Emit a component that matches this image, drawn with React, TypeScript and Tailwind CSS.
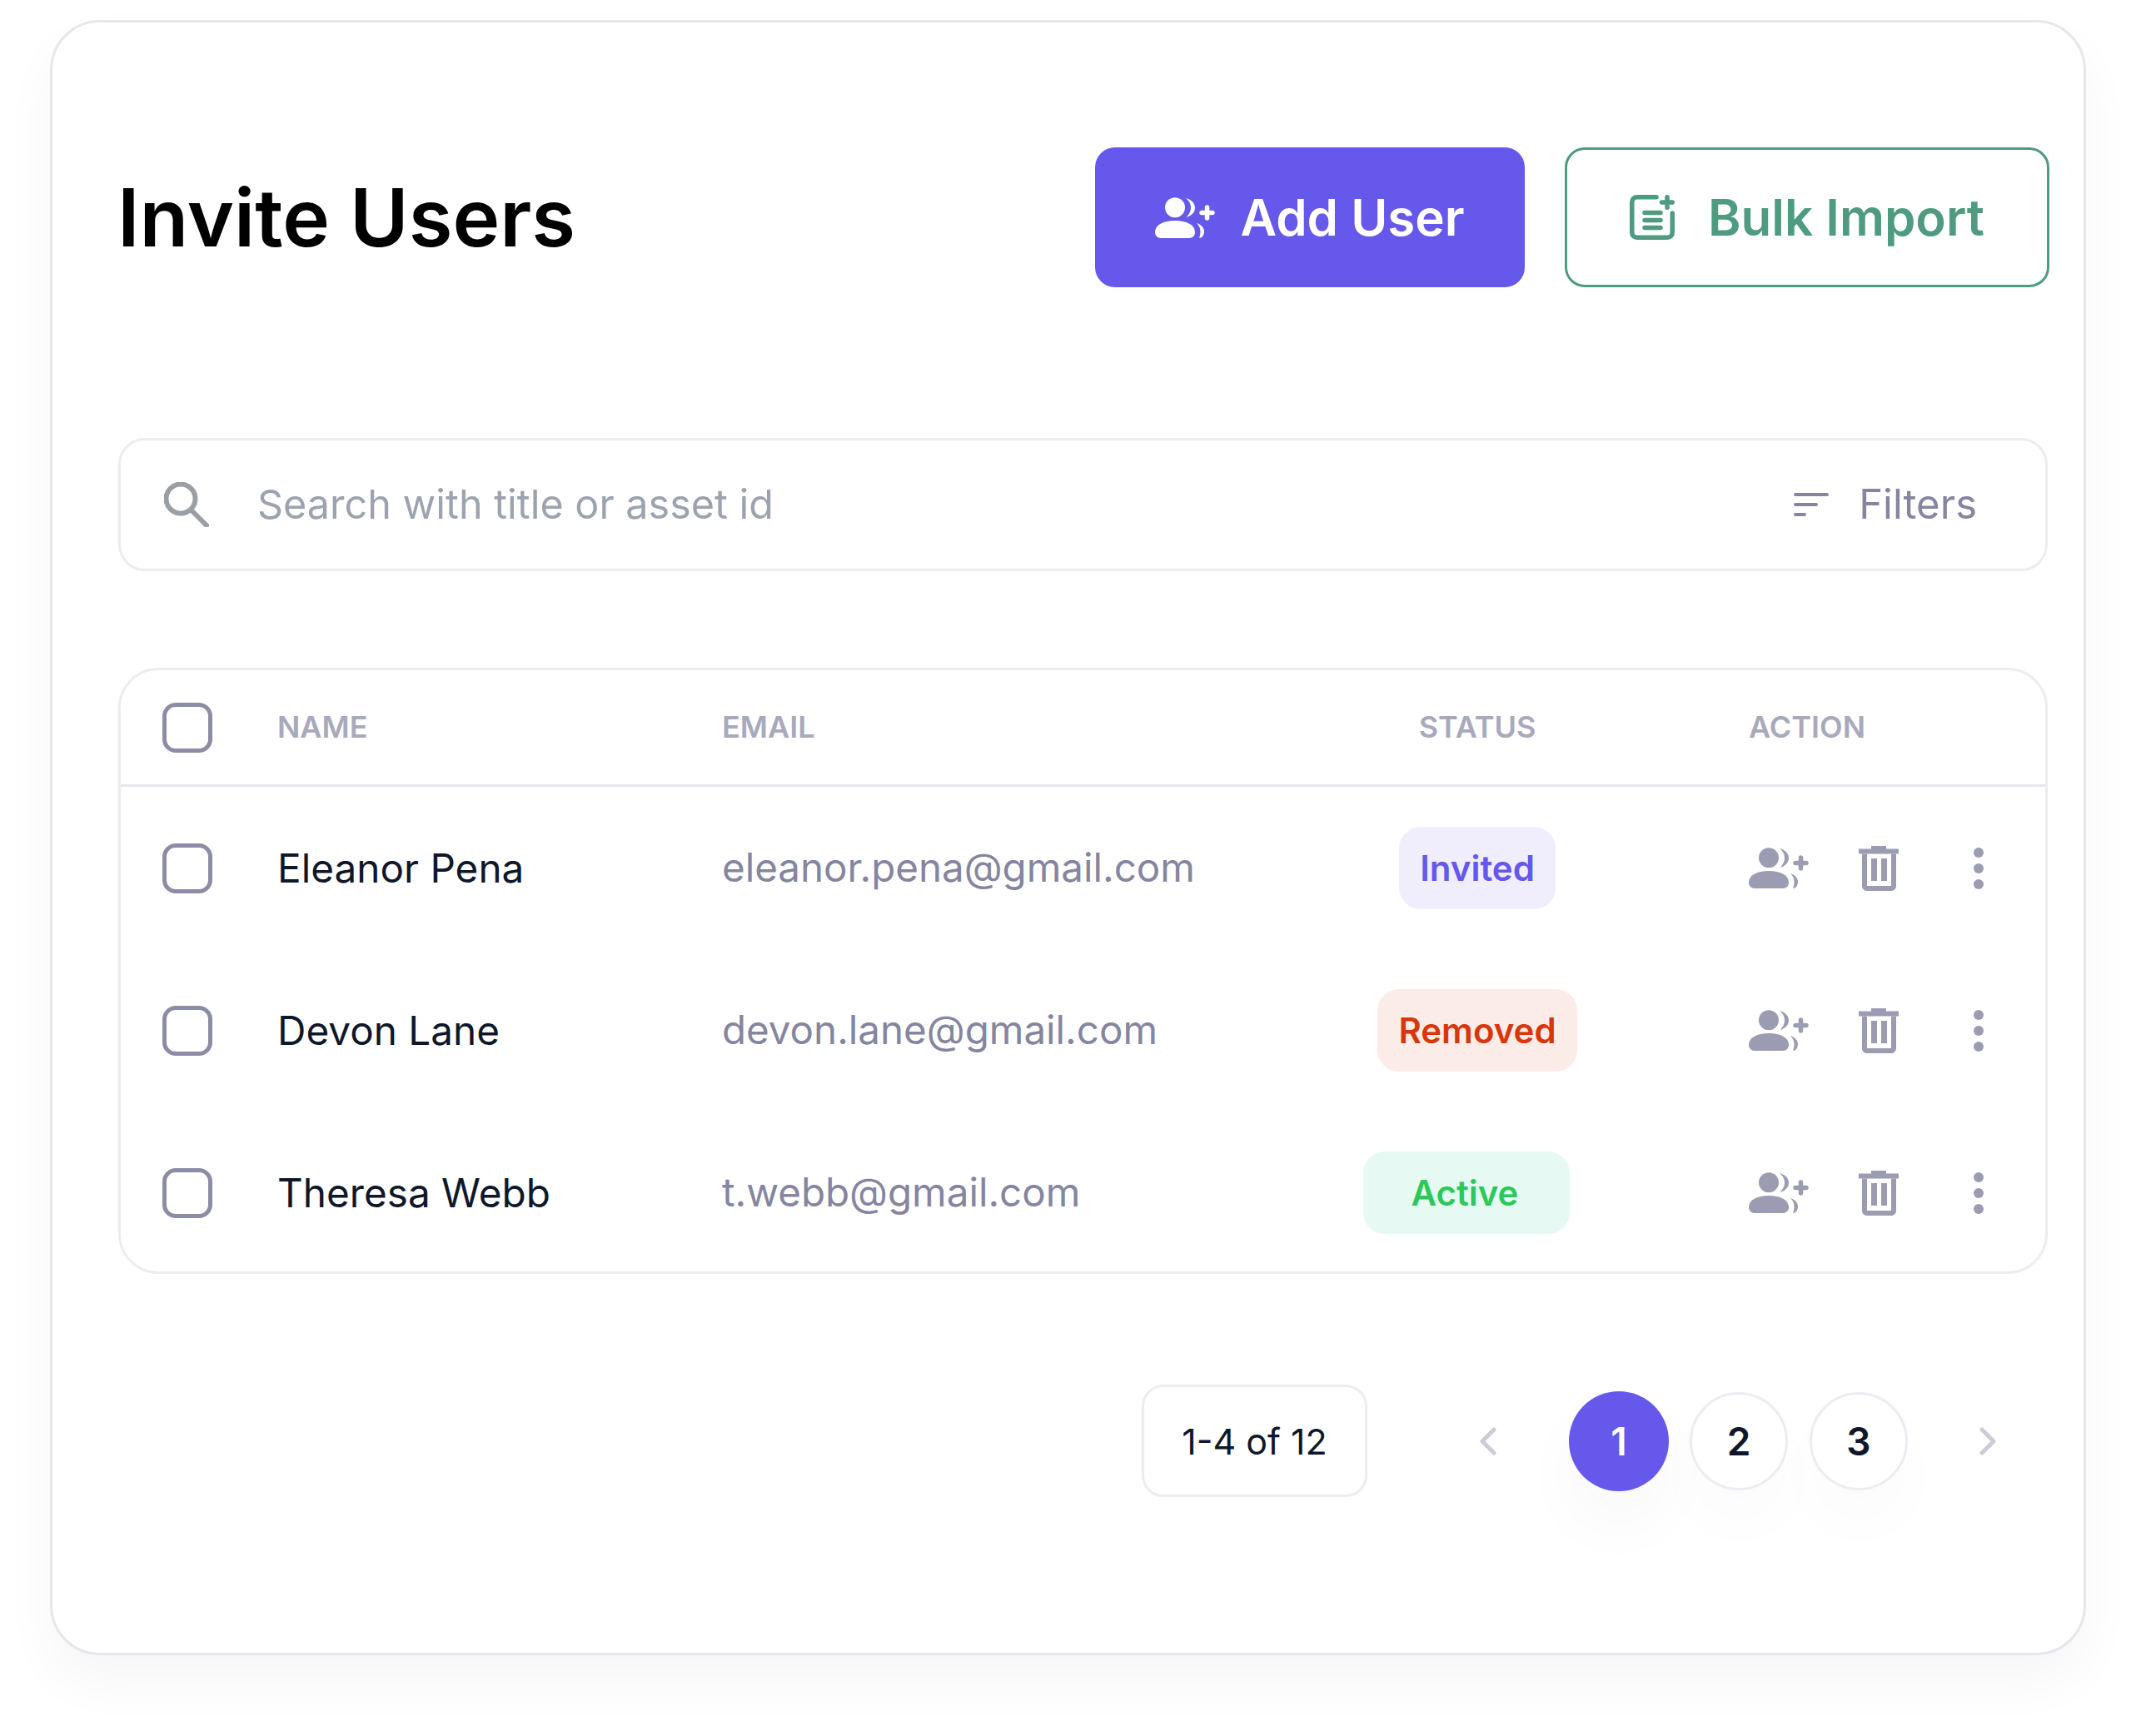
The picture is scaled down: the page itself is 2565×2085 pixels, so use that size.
import React from 'react';

const rows = [
  { name: 'Eleanor Pena', email: 'eleanor.pena@gmail.com', status: 'Invited' },
  { name: 'Devon Lane', email: 'devon.lane@gmail.com', status: 'Removed' },
  { name: 'Theresa Webb', email: 't.webb@gmail.com', status: 'Active' },
];

const UserPlusIcon: React.FC<{ className: string }> = ({ className }) => (
  <svg viewBox="0 0 72 49" className={className} fill="currentColor">
    <circle cx="24" cy="12.3" r="12" />
    <path d="M0 42C0 33 10 28 24 28C38 28 48 33 48 42C48 46 45 49 41 49H7C3 49 0 46 0 42Z" />
    <path d="M37 1C44 3 48 7 48 12.5C48 18 44 22 37.5 24C41 20 43 17 43 12.5C43 8 41 4 37 1Z" />
    <path d="M50 31C56 33 59 37 59 41C59 46 56 49 53 49C54 46 54.5 44 54.5 41C54.5 37 53 34 50 31Z" />
    <path d="M56 18.5H69M62.5 12V25" stroke="currentColor" strokeWidth="5.5" strokeLinecap="round" fill="none" />
  </svg>
);

const TrashIcon: React.FC = () => (
  <svg viewBox="0 0 48 54" className="w-[48px] h-[54px]" fill="currentColor">
    <path d="M15 0H33V3.5H48V9.5H0V3.5H15Z" />
    <path d="M4 9.5V48C4 51.5 6.5 54 10 54H39C42.5 54 45 51.5 45 48V9.5H39V48H10V9.5Z" />
    <path d="M15 15H22V42H15ZM27 15H34V42H27Z" />
  </svg>
);

const BulkIcon: React.FC = () => (
  <svg viewBox="0 0 54 54" className="w-[54px] h-[54px]" fill="none" stroke="currentColor" strokeWidth="5.5" strokeLinecap="round">
    <path d="M32 2.75H9C5 2.75 2.75 5 2.75 9V45C2.75 49 5 51.25 9 51.25H45C49 51.25 51.25 49 51.25 45V22" />
    <path d="M18 21.5H37M18 30.5H37M18 39.5H37" />
    <path d="M38.5 9H51.25M45 2.75V15.25" />
  </svg>
);

const Checkbox: React.FC = () => (
  <div className="w-[60px] h-[60px] rounded-[16px] border-[5px] border-[#8c8ca6] bg-white" />
);

const statusStyles: Record<string, string> = {
  Invited: 'bg-[#f0edfd] text-[#6558ea] px-[25px]',
  Removed: 'bg-[#fbece8] text-[#d8360c] px-[25px]',
  Active: 'bg-[#e6f9f2] text-[#2cc95a] pl-[58px] pr-[62px] mr-[26px]',
};

export default function App() {
  return (
    <div className="min-h-[2085px] bg-white pt-[24px] pl-[60px] font-['Inter',sans-serif]">
      <div className="w-[2445px] h-[1964px] rounded-[60px] border-[3px] border-[#e6e6ec] bg-white pt-[150px] pl-[79px] pr-[43px] shadow-[0_32px_64px_rgba(30,30,70,0.04)]">
        <div className="flex items-center justify-between h-[168px]">
          <h1 className="text-[96px] font-semibold text-black -ml-[1px]">Invite Users</h1>
          <div className="flex gap-[48px] -mr-[2px]">
            <button className="w-[516px] h-[168px] rounded-[24px] bg-[#6558ea] text-white flex items-center justify-center gap-[30px] text-[60px] font-semibold">
              <UserPlusIcon className="w-[72px] h-[49px]" />
              Add User
            </button>
            <button className="w-[582px] h-[168px] rounded-[24px] border-[3px] border-[#4e9b7f] text-[#4e9b7f] flex items-center justify-center gap-[40px] text-[60px] font-semibold">
              <BulkIcon />
              Bulk Import
            </button>
          </div>
        </div>

        <div className="mt-[181px] h-[160px] rounded-[32px] border-[3px] border-[#ececf1] flex items-center pl-[52px] pr-[82px]">
          <svg viewBox="0 0 54 54" className="w-[54px] h-[54px] text-[#9a9fa5]" fill="none" stroke="currentColor" strokeWidth="6" strokeLinecap="round">
            <circle cx="20" cy="20" r="17.5" />
            <path d="M32 33L51 52" />
          </svg>
          <span className="ml-[58px] text-[48.5px] text-[#9ca3af]">Search with title or asset id</span>
          <div className="ml-auto flex items-center gap-[36px] text-[#8585a0]">
            <svg viewBox="0 0 42 28" className="ml-[2px] w-[42px] h-[28px]" stroke="currentColor" strokeWidth="4" strokeLinecap="round">
              <path d="M2 2H40M2 14H27M2 26H13" />
            </svg>
            <span className="text-[49px]">Filters</span>
          </div>
        </div>

        <div className="mt-[116px] h-[728px] rounded-[48px] border-[3px] border-[#ececf1]">
          <div className="flex items-center h-[140px] border-b-[3px] border-[#e6e6ec] pl-[48px] text-[36px] font-semibold text-[#a9a9bc]">
            <div className="w-[140px] pl-[2px]"><Checkbox /></div>
            <div className="w-[534px] pb-[2px]">NAME</div>
            <div className="w-[733px] pb-[2px]">EMAIL</div>
            <div className="w-[348px] pb-[2px] text-center">STATUS</div>
            <div className="ml-[152px] pb-[2px]">ACTION</div>
          </div>
          {rows.map((r) => (
            <div key={r.email} className="flex items-center h-[195px] pl-[48px]">
              <div className="w-[140px] pl-[2px]"><Checkbox /></div>
              <div className="w-[534px] pt-[2px] text-[47.7px] text-[#0f172a]">{r.name}</div>
              <div className="w-[733px] pb-[1px] text-[47.5px] text-[#8585a0]">{r.email}</div>
              <div className="w-[348px] flex justify-center">
                <span className={`h-[99px] rounded-[26px] flex items-center text-[42px] font-semibold ${statusStyles[r.status]}`}>{r.status}</span>
              </div>
              <div className="ml-[152px] flex items-center text-[#9b9cb2]">
                <UserPlusIcon className="w-[72px] h-[49px]" />
                <div className="ml-[60px]"><TrashIcon /></div>
                <div className="ml-[90px] flex flex-col gap-[7px]">
                  <span className="w-[12px] h-[12px] rounded-full bg-[#9b9cb2]" />
                  <span className="w-[12px] h-[12px] rounded-full bg-[#9b9cb2]" />
                  <span className="w-[12px] h-[12px] rounded-full bg-[#9b9cb2]" />
                </div>
              </div>
            </div>
          ))}
        </div>

        <div className="mt-[133px] flex items-center pl-[1229px]">
          <div className="w-[271px] h-[135px] pt-[2px] rounded-[26px] border-[3px] border-[#ececf1] flex items-center justify-center text-[43px] text-[#0f172a]">1-4 of 12</div>
          <svg viewBox="0 0 21 34" className="ml-[134px] w-[21px] h-[34px] text-[#cbccd6]" fill="none" stroke="currentColor" strokeWidth="5" strokeLinecap="round" strokeLinejoin="round">
            <path d="M18 3L4 17L18 31" />
          </svg>
          <div className="ml-[87px] w-[120px] h-[120px] pt-[2px] rounded-full bg-[#6558ea] text-white flex items-center justify-center text-[46px] font-semibold shadow-[0_40px_80px_rgba(30,30,70,0.03)]">1</div>
          <div className="ml-[25px] w-[118px] h-[118px] pt-[2px] rounded-full border-[3px] border-[#ececf1] bg-white text-[#0f172a] flex items-center justify-center text-[46px] font-semibold shadow-[0_40px_80px_rgba(30,30,70,0.02)]">2</div>
          <div className="ml-[26px] w-[118px] h-[118px] pt-[2px] rounded-full border-[3px] border-[#ececf1] bg-white text-[#0f172a] flex items-center justify-center text-[46px] font-semibold shadow-[0_40px_80px_rgba(30,30,70,0.02)]">3</div>
          <svg viewBox="0 0 21 34" className="ml-[86px] w-[21px] h-[34px] text-[#cbccd6]" fill="none" stroke="currentColor" strokeWidth="5" strokeLinecap="round" strokeLinejoin="round">
            <path d="M3 3L17 17L3 31" />
          </svg>
        </div>
      </div>
    </div>
  );
}
